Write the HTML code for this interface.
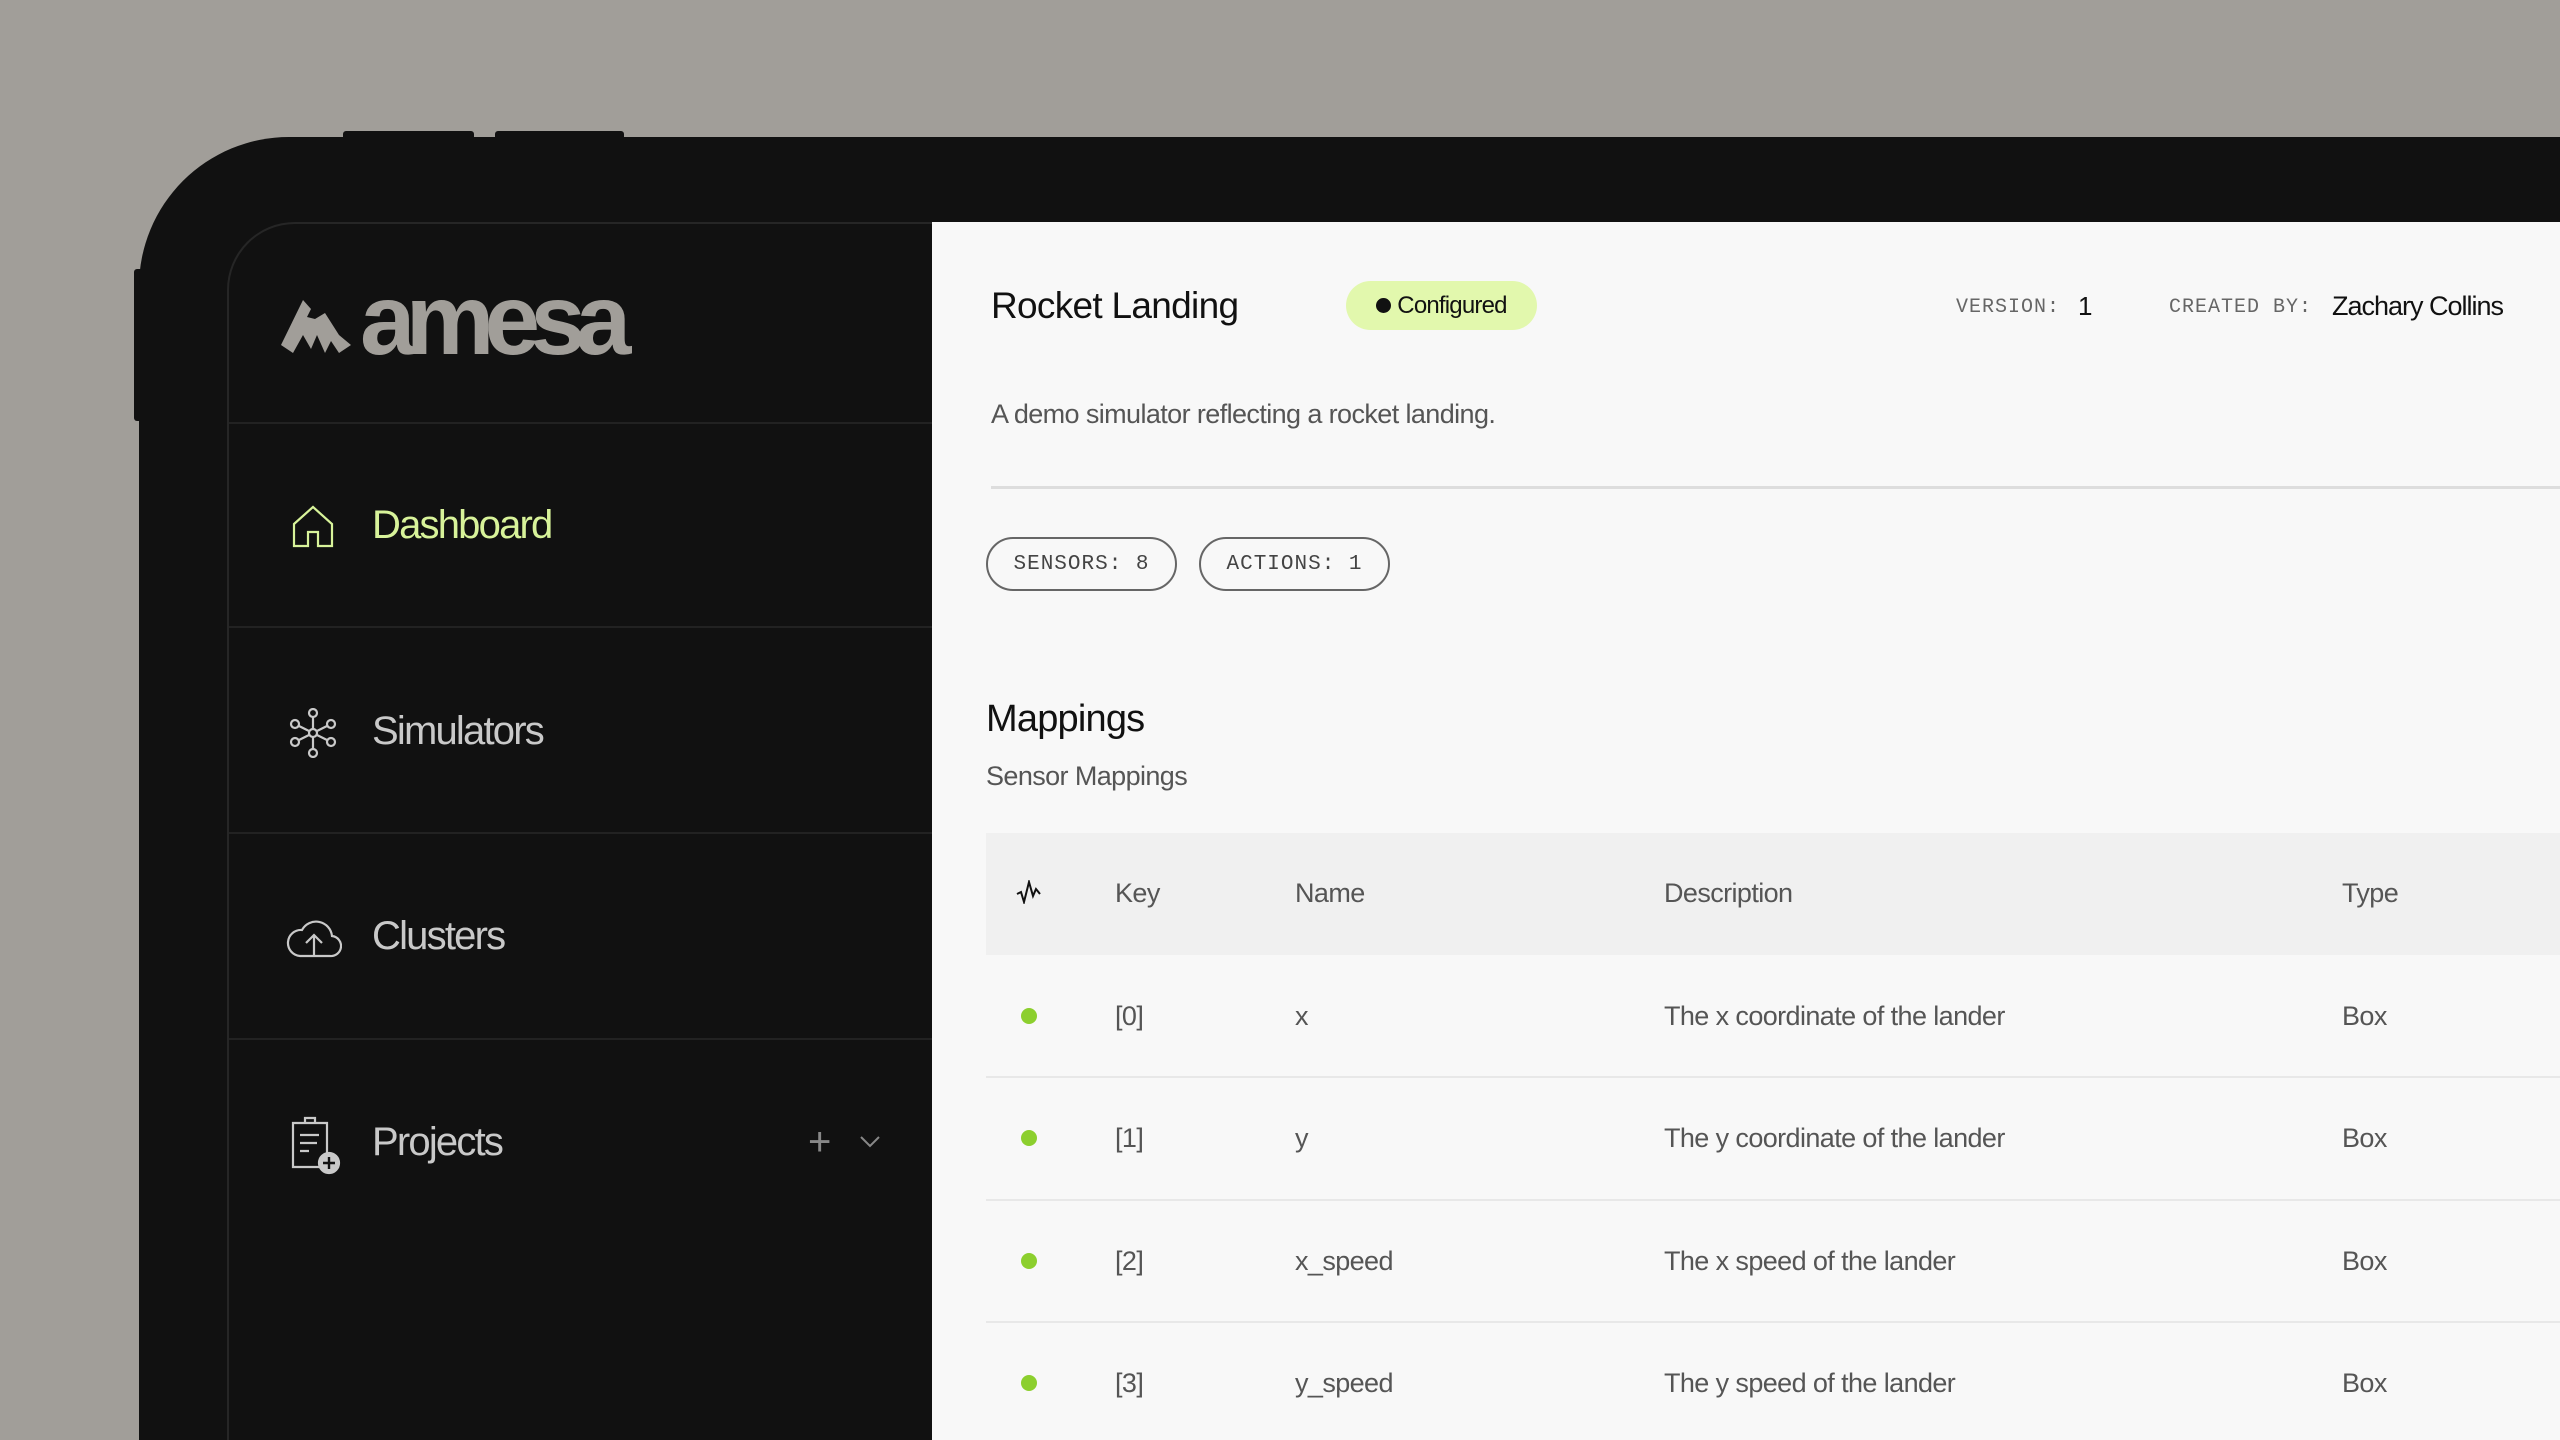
<!DOCTYPE html>
<html><head><meta charset="utf-8"><style>
*{margin:0;padding:0;box-sizing:border-box}
html,body{width:2560px;height:1440px;overflow:hidden;background:#a19e99;font-family:"Liberation Sans",sans-serif}
#wrap{position:relative;width:2560px;height:1440px;overflow:hidden;background:#a19e99}
.abs{position:absolute}
.device{left:139px;top:137px;width:2421px;height:1303px;background:#111;border-top-left-radius:150px}
.screen{left:227px;top:222px;width:2333px;height:1218px;background:#111;border:2px solid #262626;border-right:none;border-bottom:none;border-top-left-radius:68px;overflow:hidden}
.content{left:932px;top:222px;width:1628px;height:1218px;background:#f8f8f8}
.nav{color:#c9c9c9;font-size:40px;letter-spacing:-1.8px;left:372px}
.sep{left:229px;width:703px;height:2px;background:#222}
.t{color:#555;font-size:27px;letter-spacing:-0.6px}
.mono{font-family:"Liberation Mono",monospace}
.pill{height:54px;border:2px solid #666;border-radius:27px;font-family:"Liberation Mono",monospace;font-size:21px;color:#444;letter-spacing:1px;display:flex;align-items:center;justify-content:center}
.rsep{left:986px;width:1574px;height:2px;background:#e8e8e8}
.dot{width:16px;height:16px;border-radius:50%;background:#8ccf2e;left:1021px}
</style></head><body><div id="wrap">
<div class="abs" style="left:343px;top:131px;width:131px;height:10px;background:#111;border-radius:3px 3px 0 0"></div>
<div class="abs" style="left:495px;top:131px;width:129px;height:10px;background:#111;border-radius:3px 3px 0 0"></div>
<div class="abs" style="left:134px;top:269px;width:10px;height:152px;background:#111;border-radius:3px 0 0 3px"></div>
<div class="abs device"></div>
<div class="abs screen"></div>
<div class="abs content"></div>

<svg class="abs" style="left:281px;top:295px" width="72" height="58" viewBox="0 0 72 58"><path d="M0 50 L22 5 L30 14 L26 22 L34 24 L44 18 L58 40 L70 50 L58 58 L50 46 L44 58 L36 40 L30 54 L22 40 L12 58 Z" fill="#a19e99"/></svg>
<div class="abs" style="left:360px;top:270px;font-size:100px;font-weight:bold;color:#a19e99;letter-spacing:-10px;line-height:1">amesa</div>

<div class="abs sep" style="top:422px"></div>
<div class="abs sep" style="top:626px"></div>
<div class="abs sep" style="top:832px"></div>
<div class="abs sep" style="top:1038px"></div>

<svg class="abs" style="left:291px;top:504px" width="44" height="44" viewBox="0 0 44 44" fill="none" stroke="#d8f39a" stroke-width="2.2"><path d="M3 20 L22 3 L41 20 V42 H27 V28 H17 V42 H3 Z"/></svg>
<div class="abs nav" style="top:503px;color:#d8f39a">Dashboard</div>
<svg class="abs" style="left:289px;top:708px" width="48" height="50" viewBox="0 0 48 50" fill="none" stroke="#c9c9c9" stroke-width="2.2"><circle cx="24" cy="5" r="4"/><circle cx="24" cy="45" r="4"/><circle cx="6" cy="16" r="4"/><circle cx="42" cy="16" r="4"/><circle cx="6" cy="34" r="4"/><circle cx="42" cy="34" r="4"/><circle cx="24" cy="25" r="4"/><path d="M24 9V21M24 29V41M10 18L20 23M38 18L28 23M10 32L20 27M38 32L28 27"/></svg>
<div class="abs nav" style="top:709px">Simulators</div>
<svg class="abs" style="left:286px;top:914px" width="56" height="44" viewBox="0 0 56 44" fill="none" stroke="#c9c9c9" stroke-width="2.2"><path d="M14 42 H44 A10 10 0 0 0 46 22 A16 16 0 0 0 16 16 A13 13 0 0 0 14 42 Z"/><path d="M28 42 V22 M20 29 L28 21 L36 29"/></svg>
<div class="abs nav" style="top:914px">Clusters</div>
<svg class="abs" style="left:289px;top:1115px" width="54" height="60" viewBox="0 0 54 60" fill="none" stroke="#c9c9c9" stroke-width="2.2"><path d="M38 44 V8 H4 V52 H30"/><path d="M16 8 V3 H26 V8"/><path d="M11 20H30M11 28H28M11 36H20"/><circle cx="40" cy="48" r="10" fill="#c9c9c9"/><path d="M40 42V54M34 48H46" stroke="#111" stroke-width="2.4"/></svg>
<div class="abs nav" style="top:1120px">Projects</div>
<div class="abs" style="left:808px;top:1120px;font-size:40px;color:#888">+</div>
<svg class="abs" style="left:860px;top:1136px" width="20" height="12" viewBox="0 0 20 12" fill="none" stroke="#888" stroke-width="2"><path d="M1 1L10 10L19 1"/></svg>

<div class="abs" style="left:991px;top:285px;font-size:37px;color:#111;letter-spacing:-0.7px">Rocket Landing</div>
<div class="abs" style="left:1346px;top:281px;width:191px;height:49px;border-radius:25px;background:#e2f8ad;display:flex;align-items:center;justify-content:center;font-size:24px;color:#111;letter-spacing:-0.8px"><span style="display:inline-block;width:15px;height:15px;border-radius:50%;background:#111;margin-right:6px"></span>Configured</div>
<div class="abs mono" style="left:1956px;top:296px;font-size:20px;color:#666;letter-spacing:1px">VERSION:</div>
<div class="abs" style="left:2078px;top:291px;font-size:26px;color:#111">1</div>
<div class="abs mono" style="left:2169px;top:296px;font-size:20px;color:#666;letter-spacing:1px">CREATED BY:</div>
<div class="abs" style="left:2332px;top:291px;font-size:27px;color:#111;letter-spacing:-1px">Zachary Collins</div>
<div class="abs t" style="left:991px;top:399px">A demo simulator reflecting a rocket landing.</div>
<div class="abs" style="left:991px;top:486px;width:1569px;height:3px;background:#ddd"></div>
<div class="abs pill" style="left:986px;top:537px;width:191px">SENSORS: 8</div>
<div class="abs pill" style="left:1199px;top:537px;width:191px">ACTIONS: 1</div>
<div class="abs" style="left:986px;top:698px;font-size:38px;color:#111;letter-spacing:-0.8px">Mappings</div>
<div class="abs t" style="left:986px;top:761px">Sensor Mappings</div>

<div class="abs" style="left:986px;top:833px;width:1574px;height:122px;background:#f0f0f0"></div>
<svg class="abs" style="left:1016px;top:880px" width="26" height="24" viewBox="0 0 26 24" fill="none" stroke="#111" stroke-width="2"><path d="M1 14L5 12L8 22L13 2L17 16L20 9L24 14"/></svg>
<div class="abs t" style="left:1115px;top:878px">Key</div>
<div class="abs t" style="left:1295px;top:878px">Name</div>
<div class="abs t" style="left:1664px;top:878px">Description</div>
<div class="abs t" style="left:2342px;top:878px">Type</div>

<div class="abs dot" style="top:1008px"></div>
<div class="abs t" style="left:1115px;top:1001px">[0]</div>
<div class="abs t" style="left:1295px;top:1001px">x</div>
<div class="abs t" style="left:1664px;top:1001px">The x coordinate of the lander</div>
<div class="abs t" style="left:2342px;top:1001px">Box</div>
<div class="abs rsep" style="top:1076px"></div>

<div class="abs dot" style="top:1130px"></div>
<div class="abs t" style="left:1115px;top:1123px">[1]</div>
<div class="abs t" style="left:1295px;top:1123px">y</div>
<div class="abs t" style="left:1664px;top:1123px">The y coordinate of the lander</div>
<div class="abs t" style="left:2342px;top:1123px">Box</div>
<div class="abs rsep" style="top:1199px"></div>

<div class="abs dot" style="top:1253px"></div>
<div class="abs t" style="left:1115px;top:1246px">[2]</div>
<div class="abs t" style="left:1295px;top:1246px">x_speed</div>
<div class="abs t" style="left:1664px;top:1246px">The x speed of the lander</div>
<div class="abs t" style="left:2342px;top:1246px">Box</div>
<div class="abs rsep" style="top:1321px"></div>

<div class="abs dot" style="top:1375px"></div>
<div class="abs t" style="left:1115px;top:1368px">[3]</div>
<div class="abs t" style="left:1295px;top:1368px">y_speed</div>
<div class="abs t" style="left:1664px;top:1368px">The y speed of the lander</div>
<div class="abs t" style="left:2342px;top:1368px">Box</div>
</div></body></html>
